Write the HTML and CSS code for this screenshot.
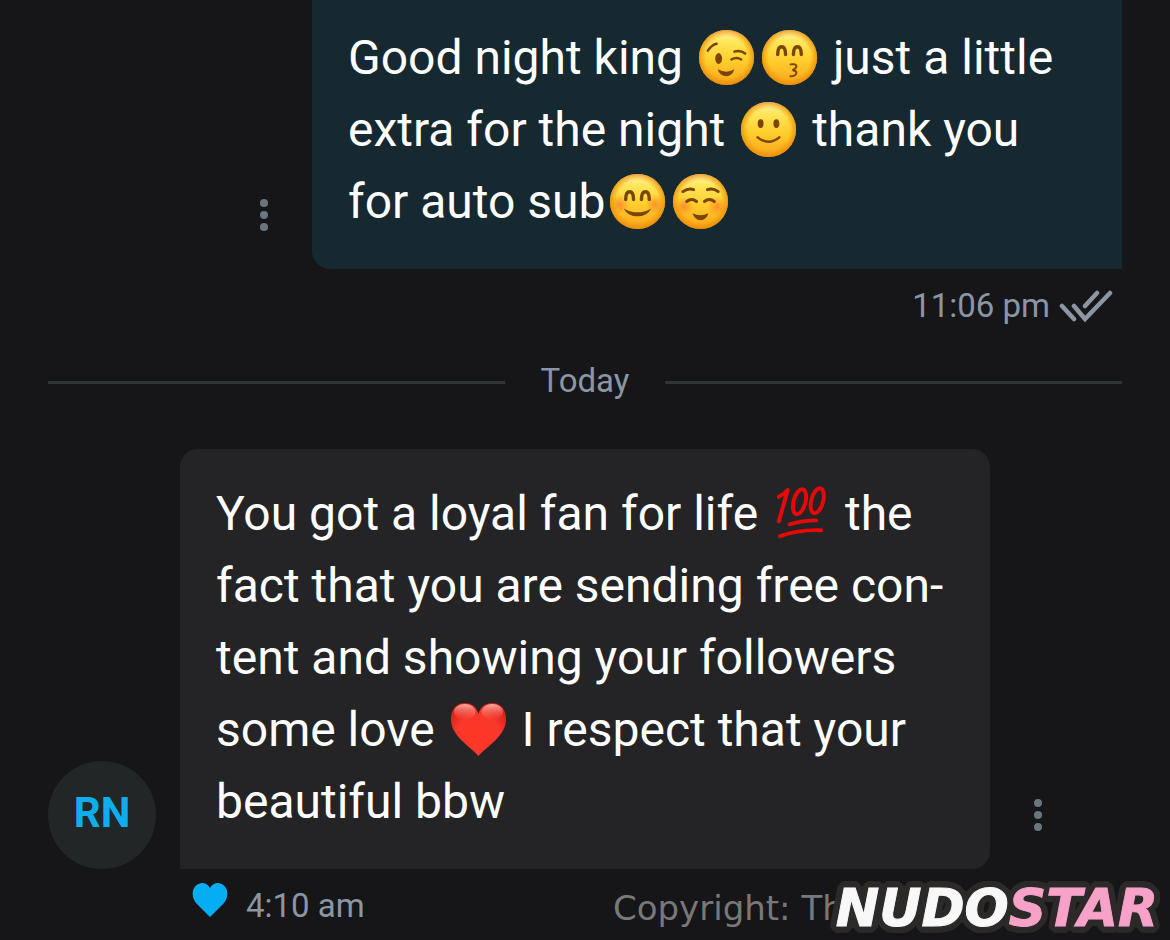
FILE: index.html
```html
<!DOCTYPE html>
<html lang="en">
<head>
<meta charset="utf-8">
<meta name="viewport" content="width=device-width, initial-scale=1">
<title>Messages</title>
<link rel="stylesheet" href="styles.css">
</head>
<body>
<svg class="defs" aria-hidden="true">
  <defs>
    <linearGradient id="skin" x1="0" y1="0" x2="0" y2="1">
      <stop offset="0" stop-color="#fff6b8"/><stop offset=".2" stop-color="#ffe75c"/><stop offset=".55" stop-color="#fecf2c"/><stop offset="1" stop-color="#f8a41c"/>
    </linearGradient>
    <radialGradient id="rim">
      <stop offset=".75" stop-color="#f08a00" stop-opacity="0"/><stop offset="1" stop-color="#ea8500" stop-opacity=".75"/>
    </radialGradient>
    <radialGradient id="blush">
      <stop offset="0" stop-color="#ff6a2a" stop-opacity=".6"/><stop offset="1" stop-color="#ff6a2a" stop-opacity="0"/>
    </radialGradient>
    <radialGradient id="red" cx=".5" cy=".6" r=".65">
      <stop offset="0" stop-color="#ff3524"/><stop offset=".6" stop-color="#f9382c"/><stop offset="1" stop-color="#d81c16"/>
    </radialGradient>
    <linearGradient id="shine" x1="0" y1="0" x2="0" y2="1">
      <stop offset="0" stop-color="#ffd0c4" stop-opacity=".8"/><stop offset="1" stop-color="#ff8070" stop-opacity="0"/>
    </linearGradient>
    <g id="face"><circle cx="32" cy="32" r="28" fill="url(#skin)"/><circle cx="32" cy="32" r="28" fill="url(#rim)"/></g>
    <g id="dots" fill="#6b757d"><circle cx="4" cy="4" r="4"/><circle cx="4" cy="16" r="4"/><circle cx="4" cy="28" r="4"/></g>
  </defs>
</svg>
<main class="chat">
  <section class="message message-out">
    <button class="more" aria-label="Message options"><svg width="8" height="32"><use href="#dots"/></svg></button>
    <p class="bubble bubble-out">Good night king <svg class="emoji" viewBox="0 0 64 64" role="img" aria-label="winking face"><use href="#face"/><g fill="none" stroke="#7b4500" stroke-width="2.5" stroke-linecap="round"><path d="M13 25q4-6 9-7M40 26q6-2 11 2M37 34q5-3 10 0"/></g><ellipse cx="24" cy="33" rx="3.5" ry="5.5" fill="#7b4500"/><path d="M23 44q9 5 17 0q-2 7-8 7q-7 0-9-7z" fill="#7b4500"/></svg><svg class="emoji" viewBox="0 0 64 64" role="img" aria-label="kissing face with smiling eyes"><use href="#face"/><g fill="none" stroke="#7b4500" stroke-linecap="round"><path stroke-width="3.5" d="M20 29q0-8 4-8q4 0 4 8M36 29q0-8 4-8q4 0 4 8"/><path stroke-width="2" d="M33 39q6-1 6 2q0 2-4 4q4 0 4 3q-1 3-6 3"/></g></svg> just a little extra for the night <svg class="emoji" viewBox="0 0 64 64" role="img" aria-label="slightly smiling face"><use href="#face"/><ellipse cx="24" cy="26" rx="3" ry="4.5" fill="#7b4500"/><ellipse cx="40" cy="26" rx="3" ry="4.5" fill="#7b4500"/><path d="M21 40q11 9 22 0" fill="none" stroke="#7b4500" stroke-width="2.5" stroke-linecap="round"/></svg> thank you for auto sub<svg class="emoji" viewBox="0 0 64 64" role="img" aria-label="smiling face with smiling eyes"><use href="#face"/><circle cx="14" cy="35" r="10" fill="url(#blush)"/><circle cx="50" cy="35" r="10" fill="url(#blush)"/><path d="M20 30q0-8 4-8q4 0 4 8M36 30q0-8 4-8q4 0 4 8" fill="none" stroke="#7b4500" stroke-width="3.5" stroke-linecap="round"/><path d="M18 39q14 8 28 0q-4 8-14 8q-10 0-14-8z" fill="#7b4500"/></svg><svg class="emoji" viewBox="0 0 64 64" role="img" aria-label="smiling face"><use href="#face"/><circle cx="15" cy="37" r="10" fill="url(#blush)"/><circle cx="49" cy="37" r="10" fill="url(#blush)"/><path d="M14 22q6-4 11-2M39 20q6-2 11 2M18 32q5-4 10 0M36 32q5-4 10 0" fill="none" stroke="#7b4500" stroke-width="3" stroke-linecap="round"/><path d="M24 44q8 4 16 0q-2 7-8 7q-6 0-8-7z" fill="#7b4500"/></svg></p>
  </section>
  <div class="meta meta-out">
    <time>11:06 pm</time>
    <svg width="54" height="32" viewBox="0 0 54 32" role="img" aria-label="Read"><path d="M3 16l12 13M15 16l11 13L51 3M26 16L38 3" fill="none" stroke="#8a96a3" stroke-width="4.5" stroke-linecap="round"/></svg>
  </div>
  <h2 class="day">Today</h2>
  <section class="message message-in">
    <span class="avatar">RN</span>
    <p class="bubble bubble-in">You got a loyal fan for life <svg class="emoji" viewBox="0 0 64 64" role="img" aria-label="100"><g fill="none" stroke="#e80808" stroke-width="4" stroke-linecap="round" stroke-linejoin="round"><path d="M9 15Q15 12 18 8L9 40"/><ellipse cx="30" cy="20" rx="6" ry="13" transform="rotate(15 30 20)"/><ellipse cx="48" cy="19" rx="6" ry="13" transform="rotate(15 48 19)"/><path d="M20 43Q33 39 47 39M10 55Q30 48 52 49"/></g></svg> the fact that you are sending free con&shy;tent and showing your followers some love <svg class="emoji" viewBox="0 0 64 64" role="img" aria-label="red heart"><path d="M32 59C24 49 4 39 4 21C4 11 10 5 18 5C25 5 30 9 32 16C34 9 39 5 46 5C54 5 60 11 60 21C60 39 40 49 32 59z" fill="url(#red)"/><ellipse cx="18" cy="14" rx="11" ry="8" fill="url(#shine)"/><ellipse cx="46" cy="14" rx="11" ry="8" fill="url(#shine)"/></svg> I respect that your beautiful bbw</p>
    <button class="more" aria-label="Message options"><svg width="8" height="32"><use href="#dots"/></svg></button>
  </section>
  <footer class="meta meta-in">
    <button class="like" aria-label="Liked"><svg width="36" height="34" viewBox="0 0 36 34"><path d="M18 34L4 20C-2 13 0 1 10 0Q15 0 18 5Q21 0 26 0C36 1 38 13 32 20z" fill="#05adf2"/></svg></button>
    <time>4:10 am</time>
  </footer>
  <div class="watermark"><span class="copyright">Copyright: Th</span><span class="brand">NUDO<span class="brand-star">STAR</span></span></div>
</main>
</body>
</html>
```
FILE: styles.css
```css
* { box-sizing: border-box; }
body { margin: 0; background: #161618; color: #fefefe; font-family: Roboto, sans-serif; }
.defs { position: absolute; width: 0; height: 0; }
button { padding: 0; border: 0; background: none; cursor: pointer; }
button svg { display: block; }
.chat { position: relative; min-height: 100vh; padding: 0 48px; overflow: hidden; }
.message { display: flex; align-items: flex-end; }
.message-out { justify-content: flex-end; gap: 44px; }
.message-in { gap: 24px; }
.bubble { flex: 0 1 810px; margin: 0; padding: 29px 36px 31px; font-size: 48px; line-height: 72px; }
.bubble-out { padding-top: 22px; background: #162830; border-radius: 0 0 0 18px; }
.bubble-in { background: #242426; border-radius: 18px 18px 18px 0; }
.emoji { width: 63px; height: 63px; vertical-align: middle; margin: -12px 0 -4px; }
.more { padding: 0 0 38px; }
.message-in .more { padding-left: 20px; }
.meta { display: flex; align-items: center; color: #8a96a3; font-size: 33px; line-height: 40px; }
.meta-out { justify-content: flex-end; gap: 9px; padding: 17px 9px 0 0; }
.day { display: flex; align-items: center; gap: 36px; margin: 35px 0 48px; color: #8a96a3; font-size: 33px; font-weight: 400; line-height: 40px; }
.day::before, .day::after { content: ""; flex: 1; height: 3px; margin-top: 3px; background: #303336; }
.avatar { display: grid; flex: none; place-items: center; width: 108px; height: 108px; padding-bottom: 4px; border-radius: 50%; background: #222627; color: #0daeea; font-size: 42px; font-weight: 700; line-height: 48px; }
.meta-in { align-items: flex-start; gap: 18px; padding: 14px 0 0 144px; }
.meta-in time { padding-top: 3px; }
.watermark { position: absolute; right: 12px; bottom: 0; display: flex; align-items: center; height: 64px; }
.copyright { margin-right: -8px; color: #78787a; font: 34px "DejaVu Sans", sans-serif; }
.brand { color: #f8f8f8; font: italic 700 52px/64px "DejaVu Sans", sans-serif; -webkit-text-stroke: 1px currentColor; filter: drop-shadow(2px 2px 0 #2c2a28) drop-shadow(-2px -2px 0 #2c2a28) drop-shadow(2px -2px 0 #2c2a28) drop-shadow(-2px 2px 0 #2c2a28) drop-shadow(2px 0 0 #2c2a28) drop-shadow(-2px 0 0 #2c2a28) drop-shadow(0 2px 0 #2c2a28) drop-shadow(0 -2px 0 #2c2a28); }
.brand-star { color: #f7a2c9; }
```
